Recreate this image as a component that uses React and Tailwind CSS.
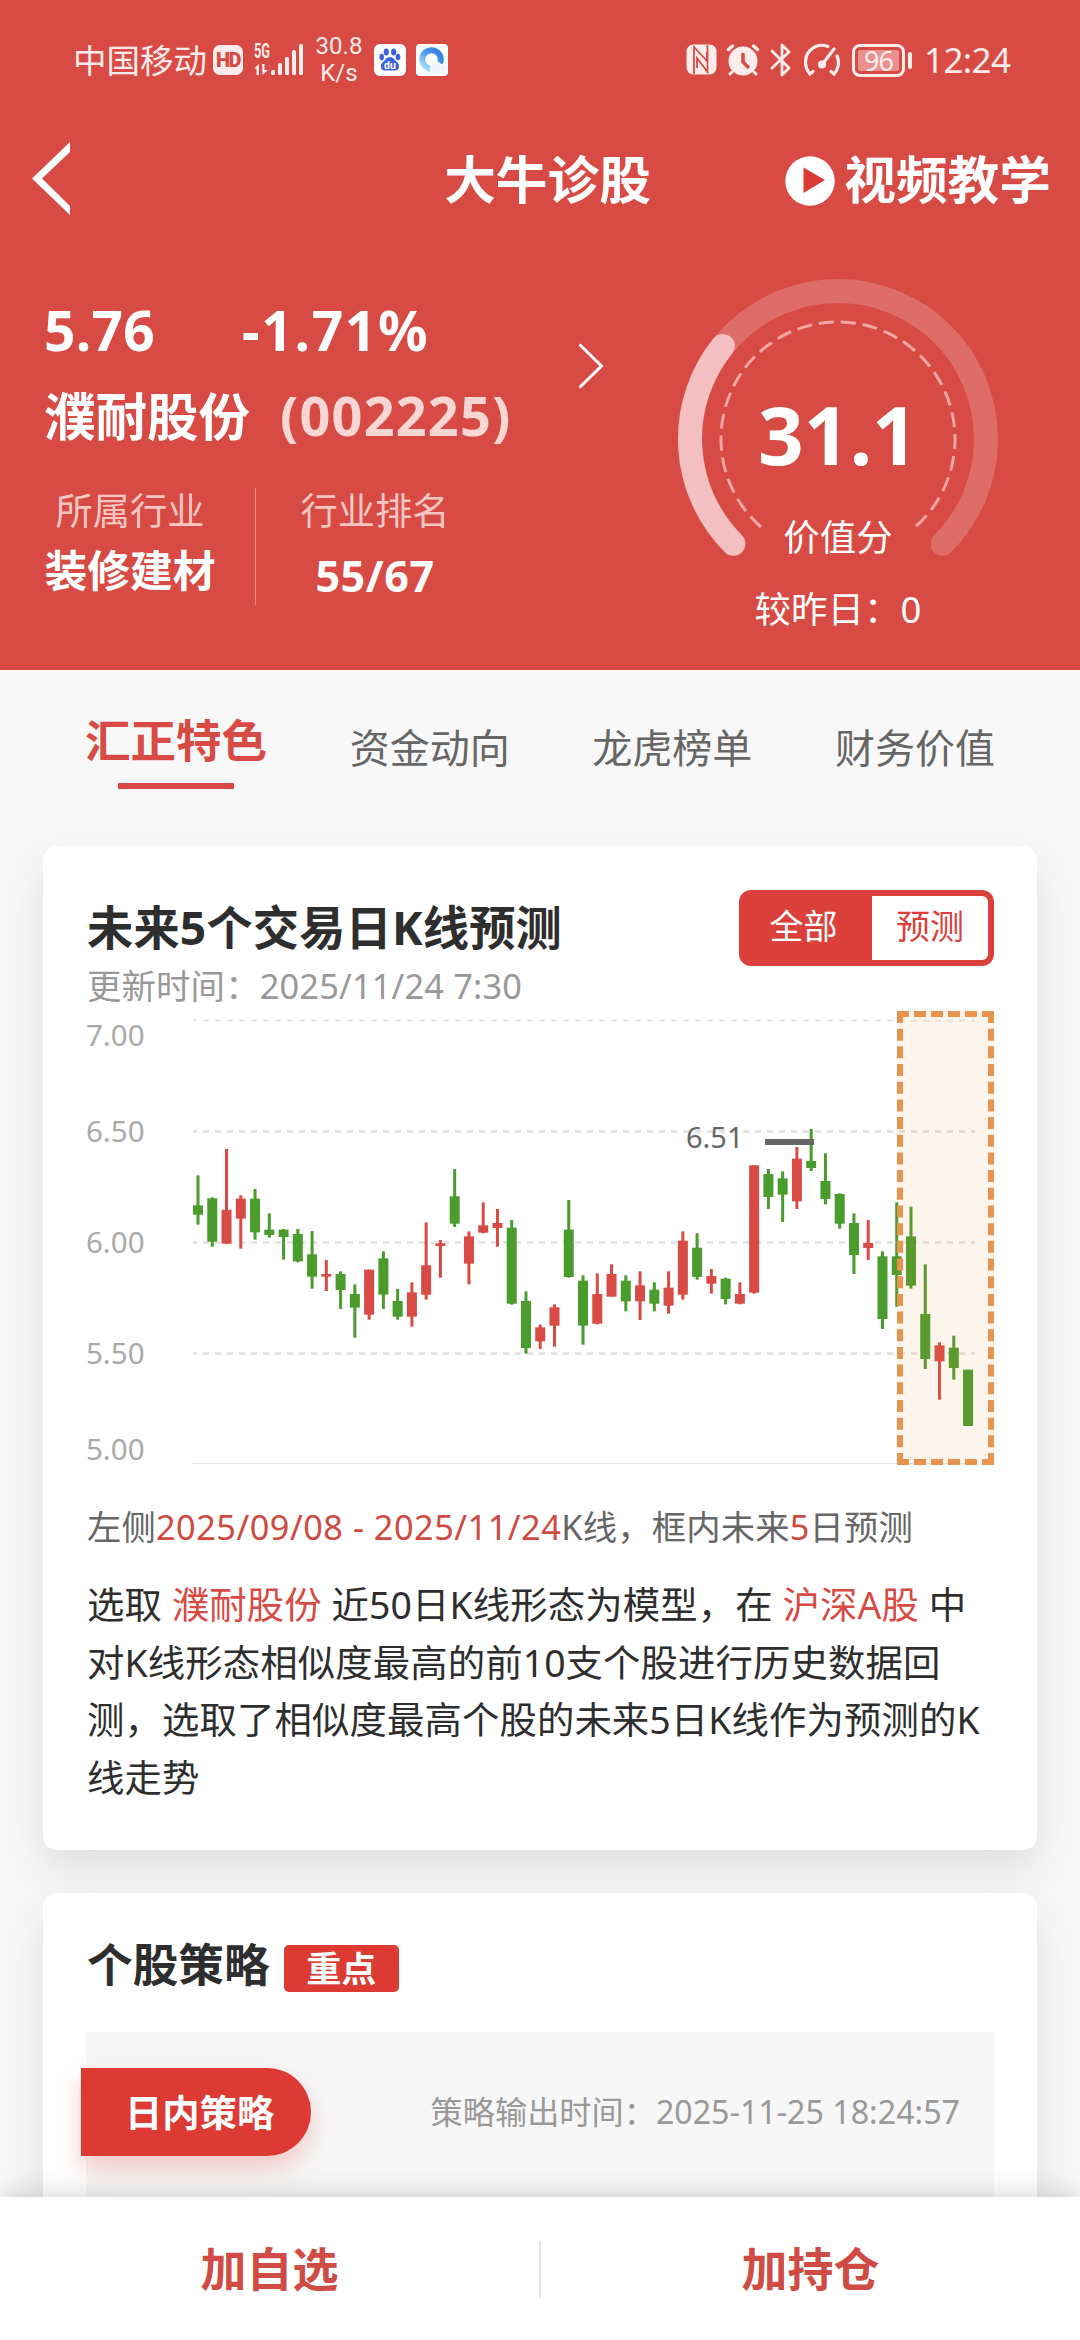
import { useState } from "react";

// [direction, high, body top, body bottom, low], in thirds of a pixel
const candles = [
  ["g", 526, 616, 644, 674],
  ["g", 592, 595, 725, 740],
  ["r", 447, 629, 731, 731],
  ["r", 586, 596, 656, 746],
  ["g", 567, 596, 697, 719],
  ["g", 640, 689, 705, 713],
  ["g", 687, 689, 711, 779],
  ["g", 687, 702, 784, 787],
  ["g", 693, 763, 830, 866],
  ["r", 780, 822, 830, 873],
  ["g", 814, 822, 870, 927],
  ["g", 853, 882, 923, 1013],
  ["r", 809, 809, 944, 959],
  ["g", 754, 775, 884, 927],
  ["g", 867, 903, 950, 959],
  ["r", 847, 877, 950, 980],
  ["r", 667, 796, 884, 899],
  ["r", 720, 730, 738, 833],
  ["g", 507, 589, 671, 681],
  ["r", 694, 709, 791, 853],
  ["r", 607, 676, 698, 700],
  ["r", 627, 669, 684, 740],
  ["g", 660, 683, 911, 914],
  ["g", 874, 903, 1044, 1061],
  ["r", 974, 982, 1024, 1047],
  ["r", 913, 922, 977, 1040],
  ["g", 600, 689, 831, 833],
  ["g", 826, 842, 977, 1034],
  ["r", 820, 882, 971, 973],
  ["r", 793, 822, 890, 890],
  ["g", 826, 842, 904, 934],
  ["r", 814, 856, 904, 960],
  ["g", 847, 869, 911, 934],
  ["r", 814, 863, 917, 941],
  ["r", 694, 722, 884, 899],
  ["g", 700, 743, 831, 839],
  ["r", 807, 828, 851, 881],
  ["g", 833, 836, 897, 913],
  ["r", 847, 882, 911, 913],
  ["r", 496, 496, 878, 881],
  ["g", 507, 522, 591, 627],
  ["g", 514, 535, 584, 666],
  ["r", 441, 476, 604, 627],
  ["g", 387, 483, 504, 513],
  ["g", 460, 543, 597, 613],
  ["g", 580, 582, 671, 686],
  ["g", 640, 669, 765, 822],
  ["r", 660, 729, 744, 780],
  ["g", 754, 769, 957, 987],
  ["g", 607, 769, 825, 920],
  ["g", 620, 709, 857, 866],
  ["g", 793, 942, 1077, 1107],
  ["r", 1027, 1036, 1084, 1199],
  ["g", 1007, 1043, 1104, 1139],
  ["g", 1109, 1109, 1278, 1278],
];

const axis = [
  { label: "7.00", line: 9.5, text: 35, w: 2 },
  { label: "6.50", line: 120.5, text: 131, w: 3 },
  { label: "6.00", line: 231.5, text: 242, w: 3 },
  { label: "5.50", line: 342.5, text: 353, w: 3 },
  { label: "5.00", line: 452.5, text: 449, w: 1 },
];

const tabs = ["汇正特色", "资金动向", "龙虎榜单", "财务价值"];

function StatusBar() {
  return (
    <div className="flex h-[120px] items-center pl-[73px] pr-[70px] text-[#fdeceb]">
      <span className="text-[33.500px] leading-[40px]">中国移动</span>
      <span className="ml-[6px] flex h-[30px] w-[30px] items-center justify-center rounded-[7px] bg-[#fdeceb] font-[Roboto] text-[20px] font-black tracking-[-1.500px] text-[#d84b44]">
        HD
      </span>
      <svg className="ml-[10px] overflow-visible" width="52" height="34" viewBox="0 0 52 34" fill="currentColor">
        <text x="1" y="15" fontSize="20" fontWeight="700" fontFamily="Roboto" textLength="16" lengthAdjust="spacingAndGlyphs">5G</text>
        <path d="M6 21v11H3.500v-6.500H1zM9 21h2.500v6H15L9.500 32z" />
        <rect x="18" y="27" width="4" height="5" rx="1.500" />
        <rect x="25" y="20" width="4" height="12" rx="1.500" />
        <rect x="32" y="14" width="4" height="18" rx="1.500" />
        <rect x="39" y="7" width="4" height="25" rx="1.500" />
        <rect x="46" y="1" width="4" height="31" rx="1.500" />
      </svg>
      <div className="ml-[9px] w-[50px] text-center font-[Roboto] text-[24px] leading-[27px]">
        <div>30.8</div>
        <div>K/s</div>
      </div>
      <svg className="ml-[10px]" width="32" height="32" viewBox="0 0 32 32">
        <rect width="32" height="32" rx="6" fill="#fff" />
        <g fill="#3d63dd">
          <ellipse cx="12.300" cy="8" rx="2.600" ry="3.500" />
          <ellipse cx="19.700" cy="8" rx="2.600" ry="3.500" />
          <ellipse cx="7.700" cy="13" rx="2.300" ry="3.200" />
          <ellipse cx="24" cy="13" rx="2.300" ry="3.200" />
          <path d="M16 13c4 0 5 4 7.500 5.500 3 3 1.500 8-2 8h-11c-3.500 0-5-5-2-8C11 17 12 13 16 13z" />
        </g>
        <text x="16" y="25" fontSize="10.500" fontWeight="700" fontFamily="Roboto" textAnchor="middle" fill="#fff">du</text>
      </svg>
      <svg className="ml-[10px]" width="32" height="32" viewBox="0 0 32 32">
        <defs>
          <linearGradient id="ring" x1="1" y1="0" x2="0" y2="1">
            <stop offset="0" stopColor="#2f7fdc" />
            <stop offset="0.500" stopColor="#4d9cf0" />
            <stop offset="1" stopColor="#b8ecfa" />
          </linearGradient>
        </defs>
        <rect width="32" height="32" rx="4" fill="#fff" />
        <circle cx="15.500" cy="15.500" r="9.300" fill="none" stroke="url(#ring)" strokeWidth="6" />
        <path d="M15 28a4 4 0 0 1 1-7 5 5 0 0 1 9-1 4 4 0 0 1 3 8z" fill="#f1f6fd" />
      </svg>
      <div className="ml-auto flex items-center">
        <svg width="32" height="32" viewBox="0 0 32 32">
          <rect x="0.500" y="0.500" width="30" height="30" rx="7" fill="currentColor" />
          <path d="M8 30V3l13 14V8M21.500 1V28L11 14v10" fill="none" stroke="#d84b44" strokeWidth="1.800" />
        </svg>
        <svg className="ml-[8px]" width="34" height="34" viewBox="0 0 34 34" fill="none" stroke="currentColor" strokeLinecap="round">
          <circle cx="17" cy="18" r="14.500" fill="currentColor" stroke="none" />
          <path d="M2.500 6.500l4-3.500M31.500 6.500l-4-3.500" strokeWidth="3.500" />
          <path d="M6 29l-2 2M28 29l2 2" strokeWidth="3" />
          <path d="M17 10v9l6 6" stroke="#d84b44" strokeWidth="3.500" strokeLinecap="butt" />
        </svg>
        <svg className="ml-[10px]" width="22" height="36" viewBox="0 0 22 36" fill="none" stroke="currentColor" strokeWidth="2.800" strokeLinejoin="round" strokeLinecap="round">
          <path d="M2 9l17 17-7 7V3l7 7L2 26" />
        </svg>
        <svg className="ml-[12px]" width="36" height="34" viewBox="0 0 36 34" fill="none" stroke="currentColor" strokeWidth="3.200" strokeLinecap="round">
          <path d="M24 3.500C12-1 1.500 8 1.500 19c0 5 2 9 4.500 12l3-2.500" />
          <path d="M33 13c3 7 1 14-3 18l-3-2.500" />
          <path d="M30 6L18.500 21" />
          <circle cx="18" cy="21.500" r="2.500" fill="currentColor" />
        </svg>
        <div className="ml-[12px] flex h-[33px] w-[53px] rounded-[8px] border-[3px] border-[#fdeceb] p-[3px]">
          <div className="flex flex-1 items-center justify-center rounded-[2px] bg-[#e8918d] text-[27px] leading-none tracking-[-1px]">
            96
          </div>
        </div>
        <div className="ml-[3px] h-[17px] w-[4px] rounded-full bg-[#fdeceb]" />
        <span className="ml-[12px] w-[86px] whitespace-nowrap text-[35px] leading-[40px] tracking-[-0.6px]">12:24</span>
      </div>
    </div>
  );
}

function TitleBar() {
  return (
    <div className="grid h-[118px] grid-cols-[1fr_auto_1fr] items-center px-[30px] text-[51.700px] font-bold leading-[60px]">
      <svg width="42" height="76" viewBox="0 0 42 76" fill="#fff">
        <path d="M40 1v10L12 37.500 40 65v9L2 37.500z" />
      </svg>
      <h1 className="pl-[15px]">大牛诊股</h1>
      <div className="-mr-px flex items-center justify-end">
        <svg className="mt-[4px]" width="50" height="50" viewBox="0 0 50 50">
          <circle cx="25" cy="25" r="24.700" fill="#fff" />
          <path d="M18.500 11.500L40 24 18.500 37z" fill="#dc3a33" />
        </svg>
        <span className="ml-[9px]">视频教学</span>
      </div>
    </div>
  );
}

function Gauge() {
  return (
    <div className="relative w-[324px] text-center">
      <svg width="324" height="290" viewBox="0 0 324 290" fill="none">
        <path d="M57.350 266.650A148 148 0 1 1 266.650 266.650" stroke="#df6d67" strokeWidth="24" strokeLinecap="round" />
        <path d="M57.350 266.650A148 148 0 0 1 46.900 68.900" stroke="#f4bfc0" strokeWidth="24" strokeLinecap="round" />
        <path d="M85 250A117 117 0 1 1 239 250" stroke="#f2a7a4" strokeWidth="3" strokeDasharray="15 7" />
      </svg>
      <div className="absolute inset-x-0 top-[107px] text-[80px] font-bold leading-[100px]">31.1</div>
      <div className="absolute inset-x-0 top-[235px] text-[36.500px] leading-[50px]">价值分</div>
      <div className="absolute inset-x-0 top-[307px] text-[36.500px] leading-[50px]">较昨日：0</div>
    </div>
  );
}

function Summary() {
  return (
    <div className="flex h-[432px] pl-[44px] pt-[6px]">
      <div className="w-[534px] pt-[52px] font-bold">
        <div className="flex gap-[87px] text-[55px] leading-[68px]">
          <span className="tracking-[0.3px]">5.76</span>
          <span className="tracking-[1.700px]">-1.71%</span>
        </div>
        <div className="mt-[17px] flex items-baseline text-[51.500px] leading-[68px]">
          濮耐股份
          <span className="ml-[30px] text-[54px] tracking-[1.200px] text-[#f8d6d4]">(002225)</span>
        </div>
        <div className="mt-[32px] flex">
          <div className="w-[172px] whitespace-nowrap text-center">
            <div className="text-[37.300px] font-normal leading-[58px] text-[#f5c6c3]">所属行业</div>
            <div className="text-[42.800px] leading-[62px]">装修建材</div>
          </div>
          <div className="ml-[39px] mt-[6px] h-[117px] w-px bg-[#e68883]" />
          <div className="ml-[44px] w-[150px] text-center">
            <div className="text-[37.300px] font-normal leading-[58px] text-[#f5c6c3]">行业排名</div>
            <div className="text-[43px] leading-[72px] tracking-[0.600px]">55/67</div>
          </div>
        </div>
      </div>
      <svg className="mt-[99px]" width="26" height="46" viewBox="0 0 26 46" fill="none" stroke="#fff" strokeWidth="3">
        <path d="M1.500 1.500L23.500 23 1.500 44.500" />
      </svg>
      <div className="ml-[72px] mt-[33px]">
        <Gauge />
      </div>
    </div>
  );
}

function KLineChart() {
  return (
    <div className="relative h-[454px]">
      <svg className="overflow-visible" width="908" height="454" viewBox="0 0 908 454">
        {axis.map((a) => (
          <g key={a.label}>
            <line x1="107" x2="889" y1={a.line} y2={a.line} stroke="#e5e5e5" strokeWidth={a.w} strokeDasharray={a.w === 1 ? "none" : "6 6"} strokeDashoffset="2" />
            <text x="0" y={a.text} fontSize="29.500" fill="#aaa">{a.label}</text>
          </g>
        ))}
        {candles.map(([dir, high, top, bottom, low], i) => {
          const x = 112 + i * 14.26;
          return (
            <g key={i} fill={dir === "g" ? "#4a9c2d" : "#d84b44"}>
              <rect x={x - 1.5} y={high / 3 - 11} width="3" height={(low - high) / 3} />
              <rect x={x - 5} y={top / 3 - 11} width="10" height={(bottom - top) / 3} />
            </g>
          );
        })}
        <rect x="679" y="128" width="49" height="6" fill="#666" />
        <text x="600" y="137" fontSize="29" fill="#666">6.51</text>
      </svg>
      {/* forecast window */}
      <div className="absolute right-0 top-0 h-[454px] w-[97px] border-[6px] border-dashed border-[#e8944f] bg-[#ee9440]/10" />
    </div>
  );
}

export default function App() {
  const [tab, setTab] = useState(0);

  return (
    <div className="flex h-[2340px] w-[1080px] flex-col overflow-hidden bg-[#f8f8f8] font-['Noto_Sans','Noto_Sans_CJK_SC',sans-serif] text-[#2e2e2e]">
      <header className="h-[670px] shrink-0 bg-[#d84b44] text-white">
        <StatusBar />
        <TitleBar />
        <Summary />
      </header>

      <nav className="flex h-[176px] shrink-0 justify-between px-[85px] pt-[38px]">
        {tabs.map((name, i) => (
          <button
            key={name}
            onClick={() => setTab(i)}
            className={
              i === tab
                ? "flex flex-col items-center text-[45.500px] font-bold leading-[64px] text-[#d84b44]"
                : "flex flex-col items-center pt-[8px] text-[40px] leading-[64px] text-[#666]"
            }
          >
            {name}
            {i === tab && <span className="mt-[11px] h-[6px] w-[116px] bg-[#d84b44]" />}
          </button>
        ))}
      </nav>

      <main className="flex min-h-0 flex-1 flex-col gap-[43px] px-[43px]">
        <section className="h-[1004px] shrink-0 rounded-[14px] bg-white px-[43px] pt-[44px] shadow-[0_20px_44px_rgba(0,0,0,0.1)]">
          <div className="flex h-[121px] justify-between">
            <div className="pl-px">
              <h2 className="pt-[7px] text-[46.200px] font-bold leading-[62px] tracking-[0.200px]">未来5个交易日K线预测</h2>
              <p className="mt-[2px] text-[34.400px] leading-[50px] tracking-[0.150px] text-[#999]">更新时间：2025/11/24 7:30</p>
            </div>
            <div className="flex h-[76px] w-[255px] rounded-[12px] bg-[#dc403a] p-[6px] text-center text-[34px] leading-[58px]">
              <button className="w-[127px] pb-[5px] pr-[10px] text-white">全部</button>
              <button className="flex-1 rounded-r-[6px] bg-white pb-[5px] text-[#dc403a]">预测</button>
            </div>
          </div>
          <KLineChart />
          <p className="mt-[37px] whitespace-nowrap pl-px text-[34.300px] leading-[50px] tracking-[0.200px] text-[#666]">
            左侧<span className="tracking-[0.500px] text-[#cf4a41]">2025/09/08 - 2025/11/24</span>K线，框内未来
            <span className="text-[#cf4a41]">5</span>日预测
          </p>
          <p className="mt-[24px] whitespace-nowrap pl-px text-[37.400px] leading-[57.500px] tracking-[0.100px]">
            选取 <span className="text-[#d84b44]">濮耐股份</span> 近50日K线形态为模型，在{" "}
            <span className="text-[#d84b44]">沪深A股</span> 中
            <br />
            对K线形态相似度最高的前10支个股进行历史数据回
            <br />
            测，选取了相似度最高个股的未来5日K线作为预测的K
            <br />
            线走势
          </p>
        </section>

        <section className="h-[600px] shrink-0 rounded-[14px] bg-white px-[43px] pt-[42px] shadow-[0_20px_44px_rgba(0,0,0,0.1)]">
          <div className="flex h-[97px] items-start pl-px">
            <h2 className="text-[45.700px] font-bold leading-[59px]">个股策略</h2>
            <span className="ml-[14px] mt-[10px] h-[47px] w-[115px] rounded-[5px] bg-[#dc3a33] text-center text-[35px] font-bold leading-[48px] text-white">
              重点
            </span>
          </div>
          <div className="flex h-[400px] items-start justify-between bg-[#f7f7f7] pr-[34px] pt-[36px]">
            <div className="-ml-[5px] h-[88px] w-[230px] rounded-r-full bg-[#dc3a33] pl-[44px] text-[37.300px] font-bold leading-[89px] text-white shadow-[0_12px_24px_rgba(220,58,51,0.25)]">
              日内策略
            </div>
            <p className="text-[32.200px] leading-[87px] text-[#999]">策略输出时间：2025-11-25 18:24:57</p>
          </div>
        </section>
      </main>

      <footer className="relative flex h-[143px] shrink-0 bg-white text-[46px] font-bold text-[#d04b43] shadow-[0_-4px_24px_rgba(0,0,0,0.15)]">
        <button className="flex-1 pb-px">加自选</button>
        <div className="mt-[44px] h-[57px] w-[2px] bg-[#e5e5e5]" />
        <button className="flex-1 pb-px">加持仓</button>
      </footer>
    </div>
  );
}
